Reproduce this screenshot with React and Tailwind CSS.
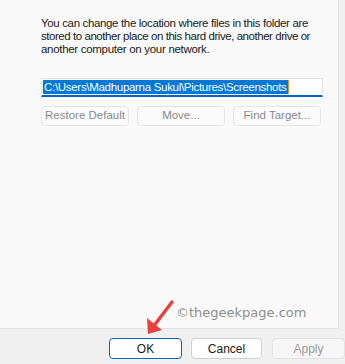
import React from 'react';

const uiFont = { fontFamily: '"Liberation Sans", Arial, sans-serif' };

function SmallButton({ children, width }) {
  return (
    <div
      className={`${width} h-[20px] flex items-center justify-center whitespace-nowrap rounded-[4px] border border-[#e5e5e5] bg-[#fbfbfb] text-[11.5px] text-[#8a8a8a]`}
    >
      {children}
    </div>
  );
}

function Arrow() {
  return (
    <svg className="absolute left-[140px] top-[295px]" width="40" height="45" viewBox="0 0 40 45">
      <line x1="32" y1="7" x2="13" y2="32" stroke="#ea4040" strokeWidth="3.5" strokeLinecap="round" />
      <polygon points="8,39 7,23 22,35" fill="#ea4040" />
    </svg>
  );
}

export default function App() {
  return (
    <div className="w-[345px] h-[364px] bg-[#f0f0f0] flex flex-col overflow-hidden" style={uiFont}>
      <div className="relative w-[339px] h-[329px] shrink-0 bg-[#f9f9f9] border-r border-b border-[#e3e3e3] pl-[41px] pt-[17px]">
        <p className="text-[11.5px] leading-[13px] text-[#1a1a1a] whitespace-nowrap">
          <span className="tracking-[-0.35px]">You can change the location where files in this folder are</span>
          <br />
          <span className="tracking-[-0.45px]">stored to another place on this hard drive, another drive or</span>
          <br />
          <span className="tracking-[-0.3px]">another computer on your network.</span>
        </p>

        <div className="mt-[22px] w-[282px] h-[19px] bg-white border border-[#e5e5e5] border-b-2 border-b-[#0067c0] flex items-center pl-[1px]">
          <span className="bg-[#0078d7] text-white text-[11.5px] leading-[14px] px-[1px] whitespace-nowrap tracking-[-0.3px]">
            C:\Users\Madhuparna Sukul\Pictures\Screenshots
          </span>
          <span className="w-[1px] h-[14px] bg-[#f58a1f]" />
        </div>

        <div className="mt-[9px] flex gap-[8px]">
          <SmallButton width="w-[88px]">Restore Default</SmallButton>
          <SmallButton width="w-[88px]">Move...</SmallButton>
          <SmallButton width="w-[88px]">Find Target...</SmallButton>
        </div>

        <div
          className="absolute left-[176px] top-[304px] text-[13px] leading-[18px] text-[#8e8e8e]"
          style={{ fontFamily: '"DejaVu Sans", sans-serif' }}
        >
          ©thegeekpage.com
        </div>
        <Arrow />
      </div>

      <div className="flex pl-[109px] pt-[9px] gap-[9px]">
        <div className="w-[73px] h-[21px] shrink-0 rounded-[4px] border border-[#0067c0] bg-white flex items-center justify-center text-[12px] text-[#1a1a1a]">
          OK
        </div>
        <div className="w-[71px] h-[21px] shrink-0 rounded-[4px] border border-[#d0d0d0] bg-white flex items-center justify-center text-[12px] text-[#1a1a1a]">
          Cancel
        </div>
        <div className="w-[73px] h-[21px] shrink-0 ml-[1px] rounded-[4px] border border-[#e3e3e3] bg-[#f6f6f6] flex items-center justify-center text-[12px] text-[#9a9a9a]">
          Apply
        </div>
      </div>
    </div>
  );
}
